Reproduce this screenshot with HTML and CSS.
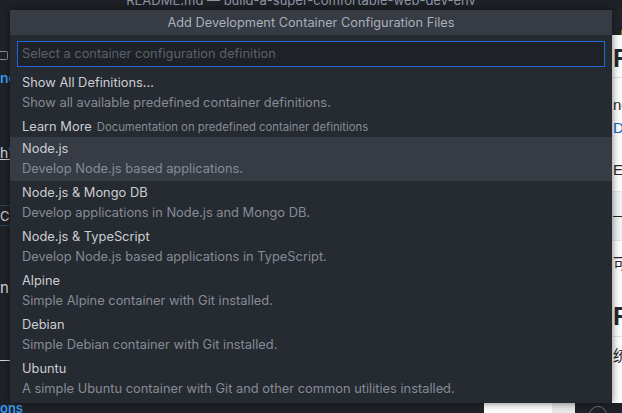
FILE: index.html
```html
<!DOCTYPE html>
<html>
<head>
<meta charset="utf-8">
<link rel="stylesheet" href="styles.css">
</head>
<body>
<div class="window">
  <div class="titlebar"><span class="ttext">README.md — build-a-super-comfortable-web-dev-env</span></div>
  <div class="main">
    <div class="editor">
      <div class="frag f-icon"><span class="kbd"></span></div>
      <div class="frag f-ne">ne</div>
      <div class="frag f-h">h"</div>
      <div class="frag f-box">C</div>
      <div class="frag f-n">n</div>
      <div class="frag f-dash">—</div>
      <div class="frag f-ons">ons</div>
    </div>
    <div class="preview">
      <div class="ptabs"><span class="mark">, I</span></div>
      <div class="doc">
        <div class="h1">Re</div>
        <p class="p1">ne</p>
        <p class="p2">De</p>
        <p class="p3">E I</p>
        <div class="code">——</div>
        <p class="p4">可以</p>
        <div class="h2">Re</div>
        <p class="p5">统後</p>
      </div>
      <div class="pbottom">
        <span class="pb-white"></span><span class="pb-gray"></span><span class="pb-dark"><span class="circle"></span></span>
      </div>
    </div>
  </div>
  <div class="quick">
    <div class="qtitle">Add Development Container Configuration Files</div>
    <div class="qinput-wrap">
      <div class="qinput">Select a container configuration definition</div>
    </div>
    <div class="qlist">
      <div class="row">
        <div class="label">Show All Definitions...</div>
        <div class="desc">Show all available predefined container definitions.</div>
      </div>
      <div class="row single">
        <span class="label">Learn More</span><span class="detail">Documentation on predefined container definitions</span>
      </div>
      <div class="row active">
        <div class="label">Node.js</div>
        <div class="desc">Develop Node.js based applications.</div>
      </div>
      <div class="row">
        <div class="label">Node.js &amp; Mongo DB</div>
        <div class="desc">Develop applications in Node.js and Mongo DB.</div>
      </div>
      <div class="row">
        <div class="label">Node.js &amp; TypeScript</div>
        <div class="desc">Develop Node.js based applications in TypeScript.</div>
      </div>
      <div class="row">
        <div class="label">Alpine</div>
        <div class="desc">Simple Alpine container with Git installed.</div>
      </div>
      <div class="row">
        <div class="label">Debian</div>
        <div class="desc">Simple Debian container with Git installed.</div>
      </div>
      <div class="row">
        <div class="label">Ubuntu</div>
        <div class="desc">A simple Ubuntu container with Git and other common utilities installed.</div>
      </div>
    </div>
  </div>
</div>
</body>
</html>
```
FILE: styles.css
```css
* { box-sizing: border-box; }
html, body { margin: 0; padding: 0; background: #1e2127; }
body { font-family: Inter, "Noto Sans", "Liberation Sans", sans-serif; }
.window {
  position: relative;
  width: 622px;
  height: 413px;
  overflow: hidden;
  background: #1e2127;
}
.titlebar {
  height: 10px;
  overflow: hidden;
  background: #1e2127;
  text-align: center;
  padding-right: 20px;
  line-height: 10px;
}
.ttext {
  display: block;
  margin-top: -8px;
  font-size: 13px;
  line-height: 16px;
  color: #8f96a3;
}
.main {
  display: flex;
  height: 403px;
}
.editor {
  width: 484px;
  flex-shrink: 0;
  background: #1f2329;
  display: flex;
  flex-direction: column;
  font-size: 13px;
  color: #d7dae0;
}
.frag { height: 12px; line-height: 12px; }
.f-icon { margin-top: 41px; }
.kbd {
  display: block;
  width: 8px; height: 9px;
  border: 1px solid #8b919b;
  border-left: none;
  border-radius: 0 2px 2px 0;
}
.f-ne { margin-top: 12px; color: #3b9cf2; font-weight: 600; font-size: 14px; }
.f-h { margin-top: 63px; font-size: 14px; border-bottom: 1px solid #c8ccd4; width: 10px; height: 14px; }
.f-box { margin-top: 45px; height: 21px; line-height: 21px; width: 10px; border-top: 1px solid #2d4660; border-bottom: 1px solid #2d4660; color: #c8ccd4; }
.f-n { margin-top: 56px; font-size: 15px; }
.f-dash { margin-top: 60px; }
.f-ons { margin-top: 36px; color: #3b9cf2; font-weight: 600; }

.preview {
  flex: 1;
  min-width: 0;
  overflow: hidden;
  display: flex;
  flex-direction: column;
  background: #fff;
}
.ptabs {
  height: 25px;
  flex-shrink: 0;
  background: #21252b;
  padding-left: 130px;
  padding-top: 13px;
  white-space: nowrap;
}
.mark { color: #c9a227; font-size: 12px; font-weight: 700; line-height: 10px; }
.doc {
  flex: 1;
  background: #fff;
  padding-left: 129px;
  color: #24292e;
  font-size: 15px;
  white-space: nowrap;
  font-family: "Liberation Sans", "Noto Sans CJK SC", sans-serif;
}
.doc p { margin: 0; line-height: 18px; }
.h1 { margin-top: 10px; font-size: 25px; font-weight: 700; line-height: 26px; border-bottom: 1px solid #dfe2e5; padding-bottom: 6px; }
.doc .p1 { margin-top: 18px; }
.doc .p2 { margin-top: 5px; color: #0366d6; }
.doc .p3 { margin-top: 24px; }
.code { margin: 12px 0 0 -129px; padding-left: 129px; background: #f1f2f4; height: 50px; line-height: 46px; border-top: 1px solid #e4e6e9; border-bottom: 1px solid #e4e6e9; }
.doc .p4 { margin-top: 14px; }
.h2 { margin-top: 30px; font-size: 25px; font-weight: 700; line-height: 26px; border-bottom: 1px solid #dfe2e5; padding-bottom: 7px; }
.doc .p5 { margin-top: 10px; }
.pbottom { height: 10px; flex-shrink: 0; display: flex; }
.pb-white { width: 68px; background: #fff; }
.pb-gray { width: 23px; background: #e9e9e9; }
.pb-dark { flex: 1; background: #1e2127; position: relative; overflow: hidden; }
.circle { position: absolute; left: 14px; top: 3px; width: 18px; height: 18px; border: 1px solid #6b7280; border-radius: 50%; }

.quick {
  position: absolute;
  left: 10px;
  top: 10px;
  width: 602px;
  height: 393px;
  background: #262a31;
  box-shadow: 0 0 8px rgba(0,0,0,0.55);
  display: flex;
  flex-direction: column;
  font-size: 12.85px;
}
.qtitle {
  height: 25px;
  line-height: 25px;
  background: #363b44;
  color: #abb0b9;
  text-align: center;
  font-size: 12.75px;
}
.qinput-wrap { padding: 6px 7px 0 7px; }
.qinput {
  height: 26px;
  line-height: 24px;
  border: 1px solid #2166d6;
  background: #1e2127;
  padding-left: 4px;
  color: #5b616b;
}
.qlist { margin-top: 4px; display: flex; flex-direction: column; }
.row { height: 44px; padding-left: 12px; }
.row.single { height: 22px; line-height: 23px; }
.row.active { background: #363b44; }
.label { line-height: 23px; color: #cbced4; }
.desc { line-height: 17px; color: #868c96; }
.detail { margin-left: 5px; font-size: 11.3px; color: #868c96; }
```
